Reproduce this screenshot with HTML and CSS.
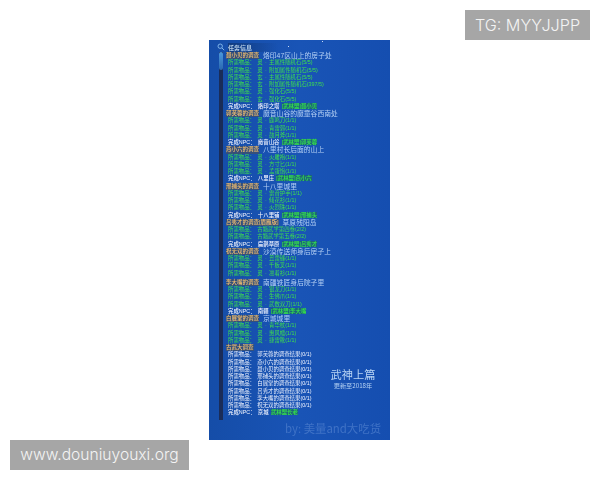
FILE: index.html
```html
<!doctype html>
<html lang="en">
<head>
  <meta charset="UTF-8">
  <title>任务信息</title>
  <link rel="stylesheet" href="styles.css">
</head>
<body>
  <div class="tag tag-top">TG: MYYJJPP</div>

  <div class="shot">
    <div class="spark spark-a"></div>
    <div class="spark spark-b"></div>
    <div class="quest-head">
      <svg class="search" width="8" height="8" viewBox="0 0 8 8"><circle cx="3.2" cy="3.2" r="2.2" fill="none" stroke="#7fb4e8" stroke-width="1"/><path d="M5 5 7.2 7.2" stroke="#7fb4e8" stroke-width="1"/></svg>
      <span class="quest-title">任务信息</span>
    </div>
    <div class="quest-body">
      <div class="scrollbar"><div class="knob"></div></div>
      <div class="quest-list">
        <div class="row head"><b>聂小贝的调查</b><i>烙印47区山上的房子处</i></div>
        <div class="row item">所需物品： 灵 · 主属性随机石(5/5)</div>
        <div class="row item">所需物品： 灵 · 附加属性随机石(5/5)</div>
        <div class="row item">所需物品： 玄 · 主属性随机石(5/5)</div>
        <div class="row item">所需物品： 玄 · 附加属性随机石(397/5)</div>
        <div class="row item">所需物品： 灵 · 强化石(5/5)</div>
        <div class="row item">所需物品： 玄 · 强化石(5/5)</div>
        <div class="row done">完成NPC： 烙印之塔 <em>[武林盟]聂小贝</em></div>

        <div class="row head"><b>郭芙蓉的调查</b><i>魔音山谷的魔童谷西南处</i></div>
        <div class="row item">所需物品： 灵 · 鹿鸣刀(1/1)</div>
        <div class="row item">所需物品： 灵 · 青雷弱(1/1)</div>
        <div class="row item">所需物品： 灵 · 鼓月斧(1/1)</div>
        <div class="row done">完成NPC： 魔音山谷 <em>[武林盟]郭芙蓉</em></div>

        <div class="row head"><b>燕小六的调查</b><i>八里村长后面的山上</i></div>
        <div class="row item">所需物品： 灵 · 火雕袍(1/1)</div>
        <div class="row item">所需物品： 灵 · 方寸匕(1/1)</div>
        <div class="row item">所需物品： 灵 · 孟蛋饱(1/1)</div>
        <div class="row done">完成NPC： 八里庄 <em>[武林盟]燕小六</em></div>

        <div class="row head"><b>邢捕头的调查</b><i>十八里城里</i></div>
        <div class="row item">所需物品： 灵 · 雷音护手(1/1)</div>
        <div class="row item">所需物品： 灵 · 倾花衫(1/1)</div>
        <div class="row item">所需物品： 灵 · 火烈珠(1/1)</div>
        <div class="row done">完成NPC： 十八里铺 <em>[武林盟]邢捕头</em></div>

        <div class="row head"><b>吕秀才的调查[眉雁版]</b><i>草原残阳岛</i></div>
        <div class="row item">所需物品： 古籍武学第四卷(2/2)</div>
        <div class="row item">所需物品： 古籍武学第五卷(2/2)</div>
        <div class="row done">完成NPC： 扁鹊草原 <em>[武林盟]吕秀才</em></div>

        <div class="row head"><b>祝无双的调查</b><i>沙漠传送师身后房子上</i></div>
        <div class="row item">所需物品： 灵 · 丑蕾镰(1/1)</div>
        <div class="row item">所需物品： 灵 · 千板叉(1/1)</div>
        <div class="row item">所需物品： 灵 · 凛着衫(1/1)</div>

        <div class="row head spaced"><b>李大嘴的调查</b><i>南疆铁匠身后院子里</i></div>
        <div class="row item">所需物品： 灵 · 银龙刀(1/1)</div>
        <div class="row item">所需物品： 灵 · 生佛爪(1/1)</div>
        <div class="row item">所需物品： 灵 · 武数双刀(1/1)</div>
        <div class="row done">完成NPC： 南疆 <em>[武林盟]李大嘴</em></div>

        <div class="row head"><b>白展堂的调查</b><i>京城城里</i></div>
        <div class="row item">所需物品： 灵 · 青华杖(1/1)</div>
        <div class="row item">所需物品： 灵 · 惠风幡(1/1)</div>
        <div class="row item">所需物品： 灵 · 捷雷靴(1/1)</div>

        <div class="row head"><b>古武大调查</b></div>
        <div class="row plain">所需物品： 郭芙蓉的调查结果(0/1)</div>
        <div class="row plain">所需物品： 燕小六的调查结果(0/1)</div>
        <div class="row plain">所需物品： 聂小贝的调查结果(0/1)</div>
        <div class="row plain">所需物品： 邢捕头的调查结果(0/1)</div>
        <div class="row plain">所需物品： 白展堂的调查结果(0/1)</div>
        <div class="row plain">所需物品： 吕秀才的调查结果(0/1)</div>
        <div class="row plain">所需物品： 李大嘴的调查结果(0/1)</div>
        <div class="row plain">所需物品： 祝无双的调查结果(0/1)</div>
        <div class="row done">完成NPC： 京城 <em>武林盟长老</em></div>
      </div>
    </div>
    <div class="stamp">
      <div class="stamp-title">武神上篇</div>
      <div class="stamp-sub">更新至2018年</div>
    </div>
    <div class="byline">by: 美量and大吃货</div>
  </div>

  <div class="tag tag-bottom">www.douniuyouxi.org</div>
</body>
</html>
```

FILE: styles.css
```css
html, body {
    margin: 0;
    padding: 0;
}

body {
    width: 600px;
    height: 480px;
    overflow: hidden;
    background: white;
    position: relative;
    font-family: "Noto Sans CJK SC", "Liberation Sans", sans-serif;
}

.tag {
    position: absolute;
    height: 30px;
    line-height: 30px;
    background-color: #a6a6a6;
    color: #f4f4f4;
    font-family: Inter, "Liberation Sans", sans-serif;
    font-weight: 300;
    text-align: center;
}

.tag-top {
    top: 10px;
    left: 465px;
    width: 125px;
    font-size: 16.2px;
}

.tag-bottom {
    top: 440px;
    left: 10px;
    width: 179px;
    font-size: 15.6px;
}

.shot {
    position: absolute;
    top: 40px;
    left: 209px;
    width: 181px;
    height: 400px;
    overflow: hidden;
    background: linear-gradient(to right, #154da8, #1954b6 50%, #154eb0);
    filter: blur(0.45px);
}

.spark {
    position: absolute;
    width: 1px;
    height: 1px;
    background: #c8dcf4;
}

.spark-a {
    top: 1px;
    left: 113px;
}

.spark-b {
    top: 6px;
    left: 79px;
}

.quest-head {
    display: flex;
    align-items: center;
    height: 10px;
    margin-top: 2px;
    padding-left: 8px;
    gap: 3px;
}

.quest-title {
    font-size: 6px;
    font-weight: 700;
    color: #b8d0e8;
    padding-right: 26px;
    background: linear-gradient(to right, #123c80, rgba(18, 60, 128, 0));
}

.quest-body {
    display: flex;
    padding-left: 10px;
}

.scrollbar {
    width: 4px;
    height: 368px;
    margin-right: 3px;
    background: #1a2c58;
}

.knob {
    height: 18px;
    background: linear-gradient(#4c98dc, #2a68b0);
    border-radius: 2px;
}

.quest-list {
    flex: 1;
}

.row {
    height: 7.26px;
    line-height: 7.26px;
    font-family: "Liberation Sans", "Noto Sans CJK SC", sans-serif;
    font-size: 5.4px;
    word-spacing: 0.8px;
    white-space: nowrap;
}

.item {
    padding-left: 2px;
    color: #3ee04c;
}

.plain {
    padding-left: 2px;
    color: #f0f4ff;
}

.done {
    padding-left: 2px;
    color: #f4f6ff;
    font-weight: 500;
}

.done em {
    font-style: normal;
    color: #36e84a;
    background: rgba(30, 120, 60, 0.5);
}

.head {
    display: flex;
    align-items: center;
}

.head b {
    font-size: 5.5px;
    font-weight: 500;
    color: #f4c070;
    background: rgba(90, 80, 60, 0.45);
}

.head i {
    font-style: normal;
    font-size: 6.8px;
    color: #b4d0f4;
    margin-left: 4px;
}

.spaced {
    margin-top: 2px;
}

.stamp {
    position: absolute;
    top: 328px;
    left: 121px;
    width: 46px;
    text-align: center;
    color: #b8d4f4;
}

.stamp-title {
    font-size: 11.2px;
    line-height: 13px;
}

.stamp-sub {
    font-size: 6.2px;
    line-height: 9px;
    white-space: nowrap;
}

.byline {
    position: absolute;
    top: 381px;
    left: 76px;
    font-size: 11.4px;
    line-height: 14px;
    color: #3f72c6;
    white-space: nowrap;
}
```
